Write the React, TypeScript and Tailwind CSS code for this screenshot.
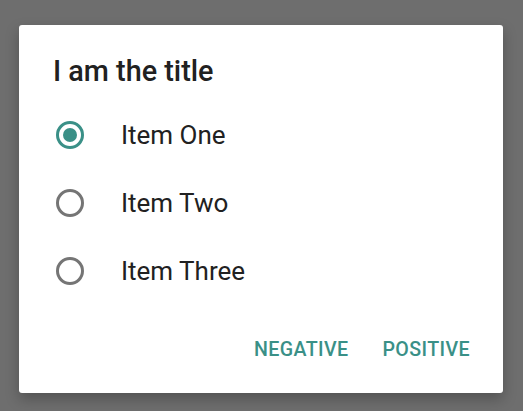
const items = ['Item One', 'Item Two', 'Item Three']

function Radio({ checked }: { checked: boolean }) {
  return (
    <div className="w-[34px] h-[34px] flex items-center justify-center">
      <div
        className={`w-[28px] h-[28px] rounded-full border-[3px] flex items-center justify-center ${
          checked ? 'border-[#3a9087]' : 'border-[#757575]'
        }`}
      >
        {checked && <div className="w-[14px] h-[14px] rounded-full bg-[#3a9087]" />}
      </div>
    </div>
  )
}

export default function App() {
  return (
    <div className="w-[523px] h-[411px] bg-[#6e6e6e] pt-[25px] pl-[19px] font-['Roboto',sans-serif]">
      <div className="w-[484px] h-[368px] bg-white rounded-[3px] shadow-[0_6px_14px_rgba(0,0,0,0.25)] flex flex-col">
        <div className="pt-[30px] px-[34px]">
          <h1 className="text-[28.8px] leading-[33px] font-medium text-[#212121]">I am the title</h1>
        </div>
        <div className="mt-[13px] pl-[34px]">
          {items.map((item, i) => (
            <div key={item} className="h-[68px] flex items-center">
              <Radio checked={i === 0} />
              <span className="ml-[34px] text-[26px] leading-[68px] text-[#212121]">{item}</span>
            </div>
          ))}
        </div>
        <div className="mt-[20px] pr-[33px] h-[50px] flex items-center justify-end gap-[34px]">
          <button className="text-[19.6px] tracking-[0.4px] font-medium text-[#3a9087] uppercase">Negative</button>
          <button className="text-[19.6px] tracking-[0.4px] font-medium text-[#3a9087] uppercase">Positive</button>
        </div>
      </div>
    </div>
  )
}
